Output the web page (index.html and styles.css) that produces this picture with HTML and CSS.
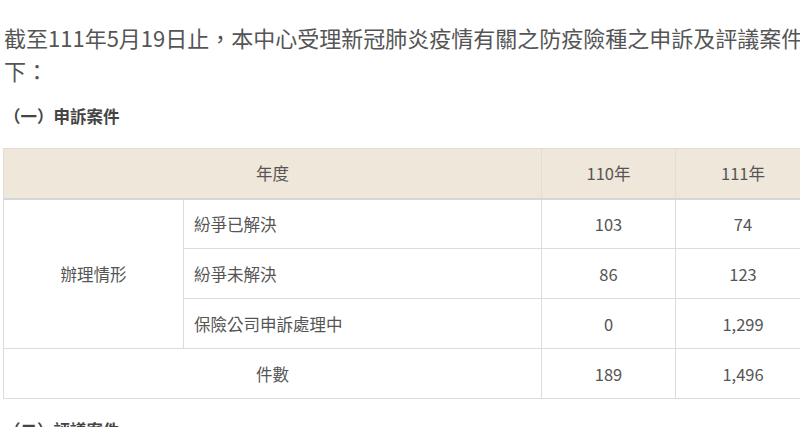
FILE: index.html
```html
<!DOCTYPE html>
<html lang="zh-Hant">
<head>
<meta charset="utf-8">
<link rel="stylesheet" href="styles.css">
</head>
<body>
<div class="page">
  <p class="lead">截至111年5月19日止，本中心受理新冠肺炎疫情有關之防疫險種之申訴及評議案件如下：</p>
  <h3 class="sub">（一）申訴案件</h3>
  <table class="stats">
    <colgroup>
      <col class="c1"><col class="c2"><col class="c3"><col class="c4">
    </colgroup>
    <thead>
      <tr><th colspan="2">年度</th><th>110年</th><th>111年</th></tr>
    </thead>
    <tbody>
      <tr><td rowspan="3" class="center">辦理情形</td><td class="left">紛爭已解決</td><td>103</td><td>74</td></tr>
      <tr><td class="left">紛爭未解決</td><td>86</td><td>123</td></tr>
      <tr><td class="left">保險公司申訴處理中</td><td>0</td><td>1,299</td></tr>
      <tr><td colspan="2">件數</td><td>189</td><td>1,496</td></tr>
    </tbody>
  </table>
  <h3 class="sub sub2">（二）評議案件</h3>
</div>
</body>
</html>
```
FILE: styles.css
```css
html, body {
  margin: 0;
  padding: 0;
  background: #fff;
  overflow: hidden;
}
body {
  font-family: "Noto Sans CJK TC", "Noto Sans", sans-serif;
  color: #555;
}
.page {
  width: 822px;
  padding: 0 0 0 4px;
}
.lead {
  margin: 21px 0 0 0;
  font-size: 22px;
  line-height: 33px;
  color: #555;
}
.sub {
  margin: 17px 0 0 0;
  font-size: 16.5px;
  line-height: 24px;
  font-weight: bold;
  color: #444;
}
.sub2 {
  margin-top: 19px;
}
.stats {
  margin: 20px 0 0 -1px;
  border-collapse: collapse;
  table-layout: fixed;
  width: 807px;
  font-size: 16.5px;
  color: #555;
}
.c1 { width: 180px; }
.c2 { width: 358px; }
.c3 { width: 134px; }
.c4 { width: 135px; }
.stats th, .stats td {
  border: 1px solid #dcdcdc;
  height: 50px;
  padding: 0 10px;
  text-align: center;
  font-weight: normal;
  box-sizing: border-box;
}
.stats thead th {
  background: #efe7da;
  border-color: #e2ddd4;
  border-bottom: 2px solid #d6d6d6;
}
.stats td.left {
  text-align: left;
}
```
